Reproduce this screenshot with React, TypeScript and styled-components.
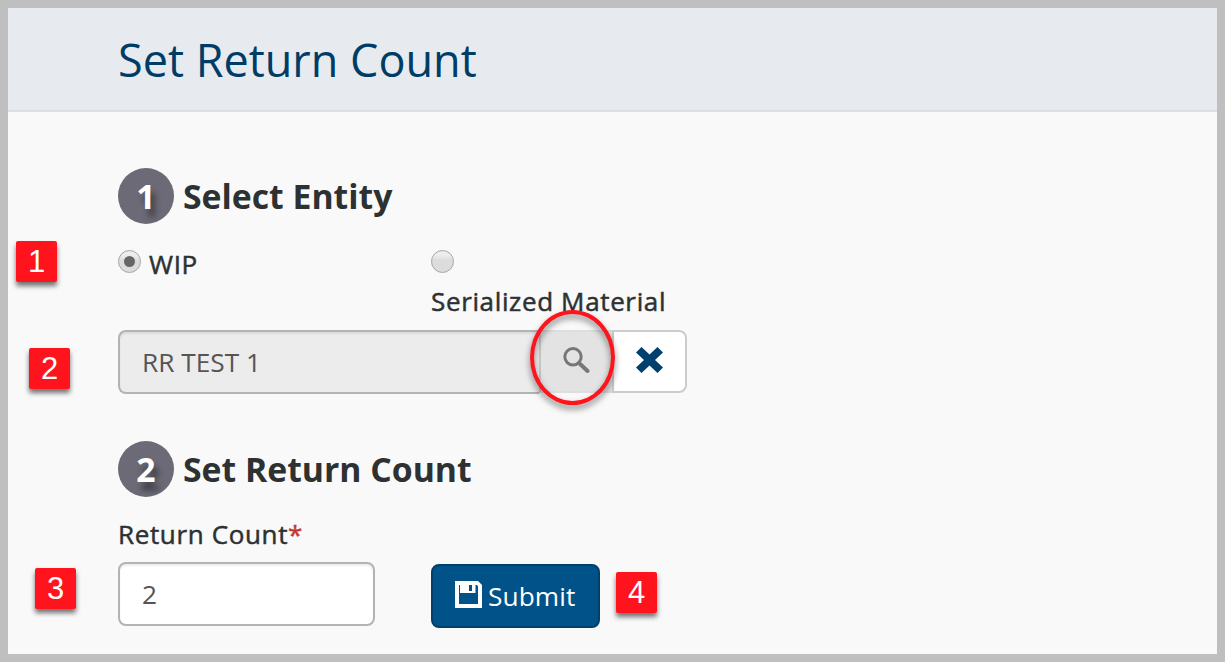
import React from "react";
import styled, { createGlobalStyle } from "styled-components";

const Global = createGlobalStyle`
  *, *::before, *::after { box-sizing: border-box; }
  body { margin: 0; font-family: "Open Sans", "Noto Sans", sans-serif; color: #2d3132; }
`;

const Frame = styled.div`
  position: relative;
  width: 1225px;
  height: 662px;
  border: 8px solid #bfbfbf;
  background: #f9f9f9;
  overflow: hidden;
`;

const Header = styled.header`
  height: 104px;
  padding-left: 110px;
  background: #e7ebf0;
  border-bottom: 2px solid #dcdfe7;
`;

const Title = styled.h1`
  margin: 0;
  font-size: 45px;
  font-weight: 400;
  line-height: 104px;
  color: #003d66;
  white-space: nowrap;
`;

const Content = styled.main`
  padding: 56px 0 0 110px;
`;

const StepHeading = styled.h2`
  display: flex;
  align-items: center;
  gap: 9px;
  height: 56px;
  margin: 0;
  font-size: 33.75px;
  font-weight: 700;
  line-height: 58px;
  white-space: nowrap;
`;

const StepNumber = styled.span`
  width: 56px;
  height: 56px;
  border-radius: 50%;
  background: #6b6a76;
  color: #fff;
  line-height: 56px;
  text-align: center;
  text-shadow: 4px 8px 6px rgba(0, 0, 0, 0.45);
`;

const RadioRow = styled.div`
  display: grid;
  grid-template-columns: 313px 260px;
  height: 80px;
  margin-top: 26px;
`;

const RadioOption = styled.label<{ $stacked?: boolean }>`
  display: flex;
  flex-direction: ${(p) => (p.$stacked ? "column" : "row")};
  gap: ${(p) => (p.$stacked ? "14px" : "8px")};
  align-items: flex-start;
`;

const Radio = styled.span`
  display: flex;
  align-items: center;
  justify-content: center;
  flex: none;
  width: 23px;
  height: 23px;
  border: 1px solid #a5a5a5;
  border-radius: 50%;
  background: linear-gradient(#ededed 20%, #dcdcdc 45%);
`;

const RadioDot = styled.span`
  width: 11px;
  height: 11px;
  border-radius: 50%;
  background: #666;
`;

const LabelText = styled.span`
  font-size: 26px;
  line-height: 36px;
  letter-spacing: 0.64px;
  -webkit-text-stroke: 0.5px currentColor;
  margin-top: -4px;
  white-space: nowrap;
`;

const EntityGroup = styled.div`
  display: flex;
  width: 569px;
  height: 64px;
`;

const Field = styled.div<{ $width: number; $readOnly?: boolean }>`
  width: ${(p) => p.$width}px;
  height: 64px;
  padding-left: 22px;
  border: 2px solid #b3b3b3;
  border-right-width: ${(p) => (p.$readOnly ? 0 : 2)}px;
  border-radius: ${(p) => (p.$readOnly ? "8px 0 0 8px" : "8px")};
  background: ${(p) => (p.$readOnly ? "#ececec" : "#fff")};
  box-shadow: inset 0 2px 2px rgba(0, 0, 0, 0.07);
  font-size: 26.25px;
  line-height: 60px;
  color: #555;
`;

const SearchButton = styled.div`
  width: 73px;
  height: 63px;
  padding: 15px 0 0 22px;
  border: 2px solid #dedede;
  border-left-color: #c9c9c9;
  border-right: 0;
  background: #e3e3e3;
`;

const ClearButton = styled.div`
  width: 75px;
  height: 63px;
  padding: 15px 0 0 22px;
  border: 2px solid #ccc;
  border-radius: 0 8px 8px 0;
  background: #fff;
`;

const SecondStep = styled.section`
  margin-top: 47px;
`;

const CountLabel = styled.div`
  margin-top: 19px;
  height: 46px;
  font-size: 26px;
  line-height: 36px;
  letter-spacing: 0.64px;
  -webkit-text-stroke: 0.5px currentColor;
`;

const Required = styled.span`
  color: #c23934;
  -webkit-text-stroke: 0.5px #c23934;
`;

const FormRow = styled.div`
  display: flex;
  gap: 56px;
`;

const SubmitButton = styled.div`
  display: flex;
  width: 169px;
  height: 64px;
  margin-top: 2px;
  padding: 15px 0 0 22px;
  border: 2px solid #00406b;
  border-radius: 8px;
  background: #005288;
  color: #fff;
  gap: 6px;
`;

const SubmitText = styled.span`
  font-size: 26.25px;
  line-height: 30px;
  letter-spacing: 0.1px;
`;

const Marker = styled.div<{ $x: number; $y: number }>`
  position: absolute;
  left: ${(p) => p.$x}px;
  top: ${(p) => p.$y}px;
  width: 41px;
  height: 41px;
  border-radius: 2px;
  background: #ff141d;
  box-shadow: 0 4px 5px rgba(0, 0, 0, 0.55);
  color: #fff;
  font: 31px/41px "Liberation Sans", sans-serif;
  text-align: center;
`;

const Ellipse = styled.div`
  position: absolute;
  left: 522px;
  top: 302px;
  width: 85px;
  height: 95px;
  border: 4px solid #ff141d;
  border-radius: 50%;
  filter: drop-shadow(0 4px 3px rgba(0, 0, 0, 0.5));
`;

const SearchIcon = () => (
  <svg width="27" height="27" viewBox="0 0 27 27" fill="none" stroke="#777">
    <circle cx="10" cy="9.8" r="8.2" strokeWidth="3" />
    <path d="M16 16 L24.5 24" strokeWidth="4" strokeLinecap="round" />
  </svg>
);

const CrossIcon = () => (
  <svg width="27" height="26" viewBox="0 0 27 26" fill="#00406e">
    <path d="M5.5 0 L13.5 7.5 L21.5 0 L27 5.5 L19 13 L27 20.5 L21.5 26 L13.5 18.5 L5.5 26 L0 20.5 L8 13 L0 5.5Z" />
  </svg>
);

const SaveIcon = () => (
  <svg width="27" height="27" viewBox="0 0 27 27" fill="#fff">
    <path fillRule="evenodd" d="M0 0 H23 L27 4 V27 H0Z M4 4 V23 H23 V5.5 L22 4 H20.5 V12 H5 V4Z M14 4 V10 H17 V4Z" />
  </svg>
);

export default function App() {
  return (
    <>
      <Global />
      <Frame>
        <Header>
          <Title>Set Return Count</Title>
        </Header>
        <Content>
          <StepHeading>
            <StepNumber>1</StepNumber>Select Entity
          </StepHeading>
          <RadioRow>
            <RadioOption>
              <Radio>
                <RadioDot />
              </Radio>
              <LabelText>WIP</LabelText>
            </RadioOption>
            <RadioOption $stacked>
              <Radio />
              <LabelText>Serialized Material</LabelText>
            </RadioOption>
          </RadioRow>
          <EntityGroup>
            <Field $width={421} $readOnly>
              RR TEST 1
            </Field>
            <SearchButton>
              <SearchIcon />
            </SearchButton>
            <ClearButton>
              <CrossIcon />
            </ClearButton>
          </EntityGroup>
          <SecondStep>
            <StepHeading>
              <StepNumber>2</StepNumber>Set Return Count
            </StepHeading>
            <CountLabel>
              Return Count<Required>*</Required>
            </CountLabel>
            <FormRow>
              <Field $width={257}>2</Field>
              <SubmitButton>
                <SaveIcon />
                <SubmitText>Submit</SubmitText>
              </SubmitButton>
            </FormRow>
          </SecondStep>
        </Content>
        <Ellipse />
        <Marker $x={8} $y={233}>1</Marker>
        <Marker $x={21} $y={340}>2</Marker>
        <Marker $x={27} $y={560}>3</Marker>
        <Marker $x={608} $y={564}>4</Marker>
      </Frame>
    </>
  );
}
